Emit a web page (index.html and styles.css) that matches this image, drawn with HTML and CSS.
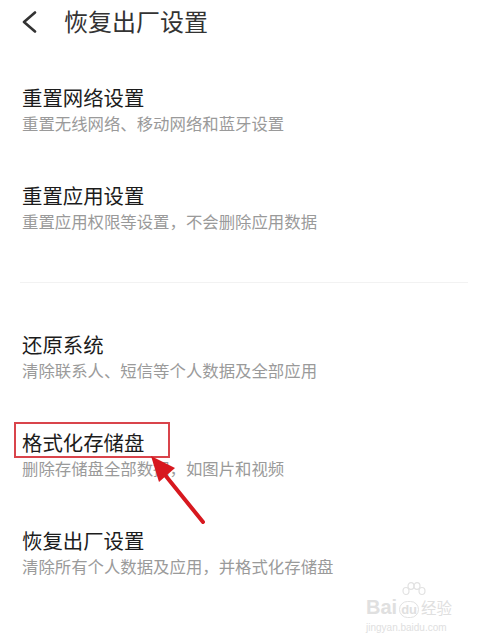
FILE: index.html
```html
<!DOCTYPE html>
<html lang="zh-CN">
<head>
	<meta charset="UTF-8">
	<title>恢复出厂设置</title>
	<link rel="stylesheet" href="styles.css">
</head>
<body>
	<div class="screen">
		<div class="header">
			<svg class="back" width="18" height="22" viewBox="0 0 18 22">
				<path d="M15 1.5 L4 11 L15 20.5" fill="none" stroke="#333" stroke-width="2.6" stroke-linecap="round" stroke-linejoin="round"/>
			</svg>
			<h1 class="title">恢复出厂设置</h1>
		</div>
		<ul class="list">
			<li class="item">
				<div class="name">重置网络设置</div>
				<div class="desc">重置无线网络、移动网络和蓝牙设置</div>
			</li>
			<li class="item">
				<div class="name">重置应用设置</div>
				<div class="desc">重置应用权限等设置，不会删除应用数据</div>
			</li>
		</ul>
		<div class="divider"></div>
		<ul class="list">
			<li class="item">
				<div class="name">还原系统</div>
				<div class="desc">清除联系人、短信等个人数据及全部应用</div>
			</li>
			<li class="item">
				<div class="name"><span class="mark">格式化存储盘</span></div>
				<div class="desc">删除存储盘全部数据，如图片和视频</div>
			</li>
			<li class="item">
				<div class="name">恢复出厂设置</div>
				<div class="desc">清除所有个人数据及应用，并格式化存储盘</div>
			</li>
		</ul>

		<svg class="arrow" width="70" height="80" viewBox="0 0 70 80">
			<line x1="56" y1="70" x2="14" y2="18" stroke="#d7181f" stroke-width="4" stroke-linecap="round"/>
			<polygon points="4,4 28,16 12,30" fill="#d7181f"/>
		</svg>

		<div class="watermark">
			<svg class="paw" width="30" height="22" viewBox="0 0 30 22">
				<g fill="none" stroke="#e2e2e2" stroke-width="1.2">
					<ellipse cx="8" cy="9" rx="3" ry="3.5"/>
					<ellipse cx="13" cy="4" rx="3" ry="3.3"/>
					<ellipse cx="19" cy="4" rx="3" ry="3.3"/>
					<ellipse cx="24" cy="9" rx="3" ry="3.5"/>
				</g>
			</svg>
			<div class="wm-logo"><span>Bai</span><span class="du">du</span><span class="jy">经验</span></div>
			<div class="wm-url">jingyan.baidu.com</div>
		</div>
	</div>
</body>
</html>
```

FILE: styles.css
```css
*{
	margin: 0;
	padding: 0;
}
body{
	background: #fff;
	font-family: "Noto Sans CJK SC", "Noto Sans", sans-serif;
}
.screen{
	width: 484px;
	height: 641px;
	position: relative;
	overflow: hidden;
}
.header{
	height: 42px;
	display: flex;
	align-items: center;
	padding-left: 20px;
	margin-bottom: 18px;
}
.back{
	display: block;
	margin-top: 1px;
}
.title{
	margin-left: 26px;
	font-size: 24px;
	font-weight: normal;
	line-height: 30px;
	color: #333;
}
.list{
	list-style: none;
}
.item{
	padding: 24px 22px 24px 22px;
	display: flex;
	flex-direction: column;
	gap: 2px;
}
.name{
	font-size: 20.4px;
	line-height: 26px;
	color: #1c1c1c;
}
.desc{
	font-size: 16.4px;
	line-height: 22px;
	color: #9a9a9a;
}
.divider{
	height: 1px;
	margin: 26px 16px 24px 20px;
	background: #f2f2f2;
}
.mark{
	position: relative;
	display: inline-block;
}
.mark::after{
	content: "";
	position: absolute;
	left: -8px;
	right: -26px;
	top: -7px;
	bottom: -3px;
	border: 2px solid #d9444b;
}
.arrow{
	position: absolute;
	left: 147px;
	top: 452px;
}
.watermark{
	position: absolute;
	left: 366px;
	top: 582px;
	color: #e0e0e0;
	font-family: "Liberation Sans", sans-serif;
	white-space: nowrap;
}
.paw{
	display: block;
	margin-left: 32px;
}
.wm-logo{
	margin-top: -8px;
	font-size: 20px;
	line-height: 22px;
	font-weight: bold;
}
.wm-logo .du{
	font-size: 13px;
	border: 1.5px solid #e2e2e2;
	border-radius: 9px;
	padding: 0 1px;
	margin: 0 2px;
}
.wm-logo .jy{
	font-family: "Noto Sans CJK SC", sans-serif;
	font-size: 15.5px;
	font-weight: normal;
}
.wm-url{
	font-size: 10px;
	line-height: 12px;
	margin-top: 1px;
}
```
